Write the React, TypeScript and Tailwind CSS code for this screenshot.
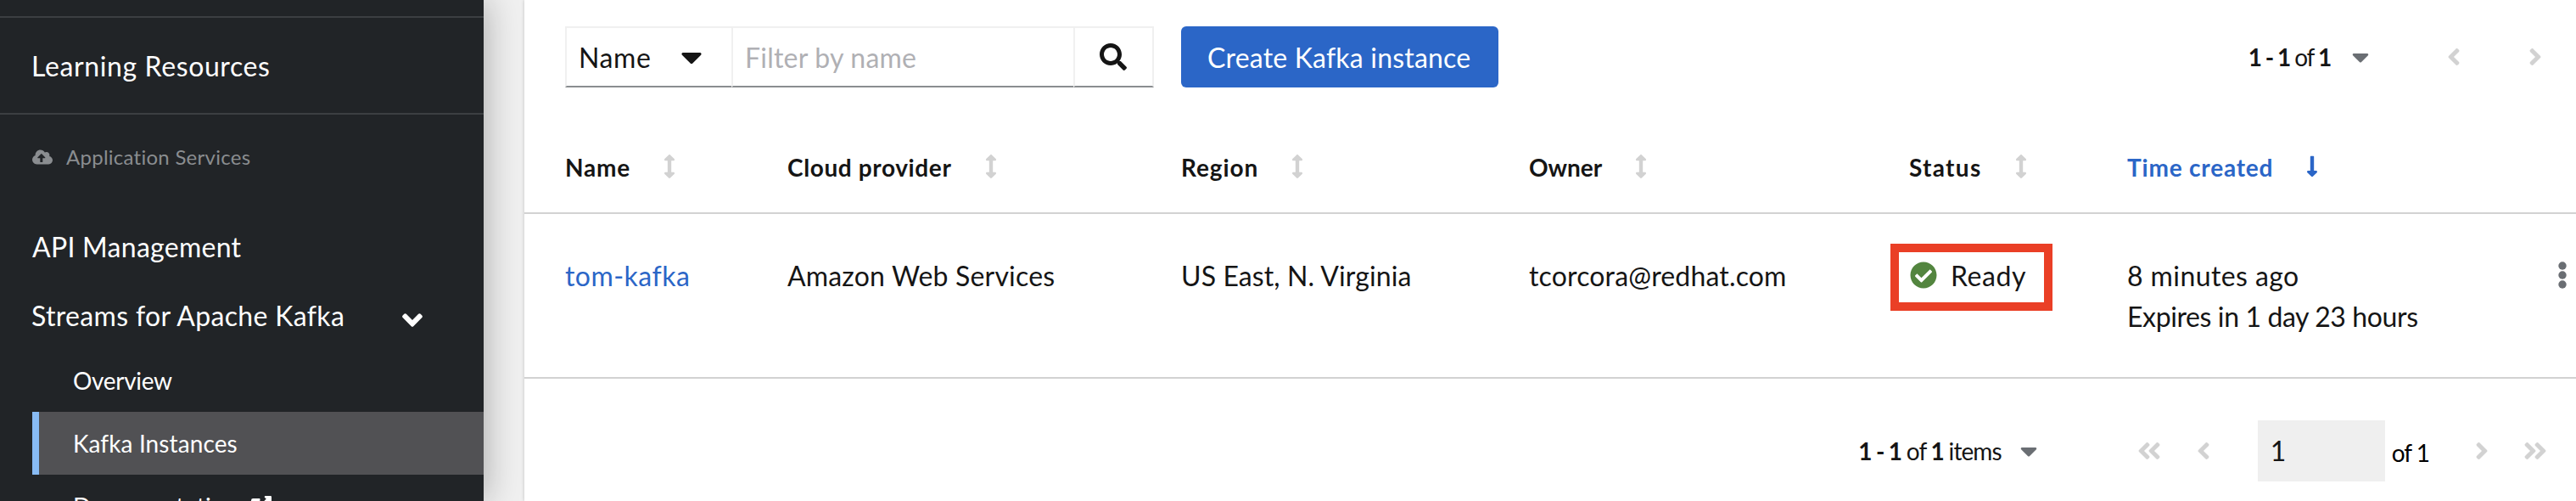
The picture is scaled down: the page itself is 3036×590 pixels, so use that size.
import React from "react";
import {
  FaAngleDoubleLeft,
  FaAngleDoubleRight,
  FaAngleDown,
  FaAngleLeft,
  FaAngleRight,
  FaArrowsAltV,
  FaCaretDown,
  FaCheckCircle,
  FaCloudUploadAlt,
  FaExternalLinkAlt,
  FaLongArrowAltDown,
  FaSearch,
} from "react-icons/fa";

const GRID = "grid grid-cols-[262px_464px_410px_448px_257px_1fr] pl-[48px]";

const columns = [
  { label: "Name", tracking: "tracking-[0.8px]" },
  { label: "Cloud provider", tracking: "tracking-[0.62px]" },
  { label: "Region", tracking: "tracking-[0.9px]" },
  { label: "Owner", tracking: "tracking-[-0.05px]" },
  { label: "Status", tracking: "tracking-[1.3px]" },
];

function Sidebar() {
  return (
    <aside className="z-10 flex h-full w-[570px] shrink-0 flex-col bg-[#212427] text-[32px] text-white shadow-[0_0_40px_rgba(3,3,3,0.32)]">
      <div className="h-[21px] shrink-0 border-b-2 border-[#3c3f42]" />
      <div className="flex h-[114px] shrink-0 items-center border-b-2 border-[#3c3f42] pt-[2px] pl-[37px]">
        <span className="tracking-[0.62px]">Learning Resources</span>
      </div>
      <div className="flex h-[115px] shrink-0 items-center pb-[16px] pl-[38px] text-[24px] text-[#8a8d90]">
        <FaCloudUploadAlt className="size-[24px]" />
        <span className="ml-[16px] tracking-[0.26px]">Application Services</span>
      </div>
      <div className="flex h-[80px] shrink-0 items-center pt-[2px] pl-[38px]">
        <span className="tracking-[0.27px]">API Management</span>
      </div>
      <div className="flex h-[81px] shrink-0 items-center justify-between pt-[2px] pr-[65px] pl-[37px]">
        <span className="tracking-[0.34px]">Streams for Apache Kafka</span>
        <FaAngleDown className="mt-[11px] size-[38px]" />
      </div>
      <div className="flex h-[74px] shrink-0 items-center pl-[86px] text-[28px]">
        <span className="tracking-[-0.31px]">Overview</span>
      </div>
      <div className="ml-[38px] flex h-[74px] shrink-0 items-center border-l-8 border-[#88bbf4] bg-[#515154] pl-[40px] text-[28px]">
        <span className="tracking-[0.1px]">Kafka Instances</span>
      </div>
      <div className="flex h-[74px] shrink-0 items-center pl-[86px] text-[28px]">
        <span className="tracking-[0.3px]">Documentation</span>
        <FaExternalLinkAlt className="ml-[15px] size-[24px]" />
      </div>
    </aside>
  );
}

function Toolbar() {
  return (
    <div className="flex h-[72px] shrink-0 items-stretch pl-[48px]">
      <div className="flex w-[196px] items-center border-2 border-r-0 border-[#f0f0f0] border-b-[#8a8d90] pl-[14px]">
        <span className="pt-[1px] tracking-[0.6px]">Name</span>
        <FaCaretDown className="ml-[28px] size-[40px]" />
      </div>
      <div className="flex w-[403px] items-center border-2 border-r-0 border-[#f0f0f0] border-b-[#8a8d90] pl-[14px] text-[#b0b0b4]">
        <span className="pt-[1px] tracking-[0.22px]">Filter by name</span>
      </div>
      <div className="flex w-[95px] items-center justify-center border-2 border-[#f0f0f0] border-b-[#8a8d90] pr-[1px]">
        <FaSearch className="size-[32px]" />
      </div>
      <div className="ml-[32px] flex w-[374px] items-center rounded-[6px] bg-[#2b66c7] pl-[31px] text-white">
        <span className="pt-[1px] tracking-[0.2px]">Create Kafka instance</span>
      </div>
      <div className="flex flex-1 items-center justify-end text-[28px]">
        <span className="mr-[19px] tracking-[-1.2px] [word-spacing:-0.7px]">
          <b>1 - 1</b> of <b>1</b>
        </span>
        <FaCaretDown className="mr-[78px] size-[32px] text-[#6a6e73]" />
        <FaAngleLeft className="mr-[64px] size-[32px] text-[#d2d2d2]" />
        <FaAngleRight className="mr-[32px] size-[32px] text-[#d2d2d2]" />
      </div>
    </div>
  );
}

function HeaderRow() {
  return (
    <div className={`${GRID} h-[149px] shrink-0 border-b-2 border-[#d2d2d2] pt-[72px] text-[28px] leading-[42px] font-bold`}>
      {columns.map((c) => (
        <div key={c.label} className="flex h-[42px] items-center">
          <span className={`${c.tracking} pt-[1px]`}>{c.label}</span>
          <FaArrowsAltV className="ml-[32px] size-[28px] text-[#d2d2d2]" />
        </div>
      ))}
      <div className="flex h-[42px] items-center text-[#2b66c7]">
        <span className="pt-[1px] tracking-[0.8px]">Time created</span>
        <FaLongArrowAltDown className="ml-[32px] size-[28px]" />
      </div>
    </div>
  );
}

function DataRow() {
  return (
    <div className={`${GRID} relative h-[194px] shrink-0 border-b-2 border-[#d2d2d2] pt-[49px] leading-[48px]`}>
      <span className="tracking-[0.47px] text-[#2b66c7]">tom-kafka</span>
      <span className="tracking-[0.18px]">Amazon Web Services</span>
      <span className="tracking-[0.1px]">US East, N. Virginia</span>
      <span className="tracking-[0.16px]">tcorcora@redhat.com</span>
      <div className="relative flex h-[48px] items-center pl-[1px]">
        <FaCheckCircle className="mb-[2px] size-[32px] text-[#53853f]" />
        <span className="ml-[16px] tracking-[0.57px]">Ready</span>
        <div className="absolute top-[-14px] left-[-22px] h-[79px] w-[191px] border-10 border-[#ea3f26]" />
      </div>
      <div className="flex justify-between">
        <div>
          <div className="tracking-[0.41px]">8 minutes ago</div>
          <div className="tracking-[-0.39px]">Expires in 1 day 23 hours</div>
        </div>
        <svg viewBox="0 0 10 32" className="mt-[7px] mr-[11px] h-[32px] w-[10px] fill-[#6a6e73]">
          <circle cx="5" cy="5" r="4.7" />
          <circle cx="5" cy="16" r="4.7" />
          <circle cx="5" cy="27" r="4.7" />
        </svg>
      </div>
    </div>
  );
}

function Footer() {
  return (
    <div className="flex flex-1 items-start justify-end pt-[49px] text-[28px]">
      <div className="flex h-[72px] items-center">
        <span className="mr-[16px] tracking-[-0.9px] [word-spacing:-0.6px]">
          <b>1 - 1</b> of <b>1</b> items
        </span>
        <FaCaretDown className="mr-[110px] size-[32px] text-[#6a6e73]" />
        <FaAngleDoubleLeft className="mr-[32px] size-[32px] text-[#d2d2d2]" />
        <FaAngleLeft className="mr-[48px] size-[32px] text-[#d2d2d2]" />
        <div className="flex h-full w-[150px] items-center bg-[#efefef] pl-[15px] text-[32px]">1</div>
        <span className="ml-[8px] pt-[3px] tracking-[-1px] text-black">of 1</span>
        <FaAngleRight className="ml-[46px] size-[32px] text-[#d2d2d2]" />
        <FaAngleDoubleRight className="mr-[32px] ml-[31px] size-[32px] text-[#d2d2d2]" />
      </div>
    </div>
  );
}

export default function App() {
  return (
    <div className="flex h-[590px] w-[3036px] overflow-hidden bg-[#f0f0f0] font-['Lato','Liberation_Sans',sans-serif] text-[32px] text-[#151515]">
      <Sidebar />
      <main className="ml-[48px] flex h-full flex-1 flex-col bg-white pt-[31px] text-[32px] shadow-[0_0_4px_rgba(3,3,3,0.2)]">
        <Toolbar />
        <HeaderRow />
        <DataRow />
        <Footer />
      </main>
    </div>
  );
}
